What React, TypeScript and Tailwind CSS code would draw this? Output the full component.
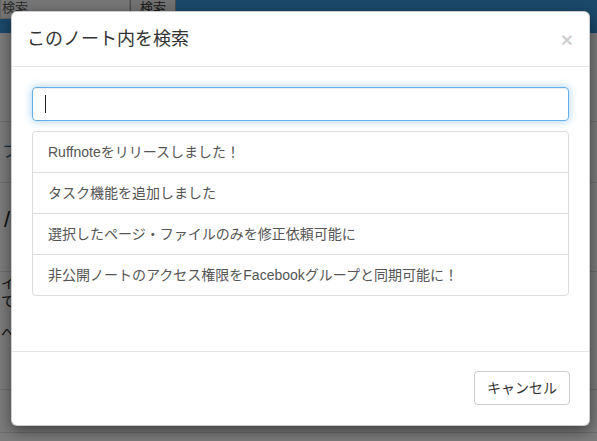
const font = { fontFamily: '"Liberation Sans", "Noto Sans CJK JP", sans-serif' };

const results = [
  "Ruffnoteをリリースしました！",
  "タスク機能を追加しました",
  "選択したページ・ファイルのみを修正依頼可能に",
  "非公開ノートのアクセス権限をFacebookグループと同期可能に！",
];

export default function App() {
  return (
    <div className="relative h-[441px] w-[597px] overflow-hidden bg-[#fafafa]" style={font}>
      {/* page behind the modal */}
      <div className="flex h-[33px] items-start bg-[#3795d7]">
        <div className="-mt-[4px] flex h-[23px] w-[177px] items-start">
          <div className="h-[23px] w-[130px] border border-[#ccc] bg-[#eee] pl-[1px] text-[13px] leading-[21px] text-[#555]">
            検索
          </div>
          <div className="h-[18px] w-[46px] border border-[#999] bg-[#e6e6e6] text-center text-[13px] leading-[22px] text-[#333]">
            検索
          </div>
        </div>
      </div>
      <div className="flex flex-col">
        <div className="h-[89px] border-b border-[#ddd]" />
        <div className="flex h-[61px] items-center border-b border-[#ddd] pl-[2px] text-[16px] text-[#2a6496]">
          フ
        </div>
        <div className="flex h-[89px] items-start border-b border-[#ddd] pl-[4px] pt-[20px] text-[22px] text-[#222]">
          /
        </div>
        <div className="flex h-[118px] flex-col border-b border-[#ddd] pl-[1px] pt-[2px] text-[14px] leading-[18px] text-[#222]">
          <span>イ</span>
          <span>て</span>
          <span className="mt-[14px]">へ</span>
        </div>
        <div className="h-[43px] border-b border-[#ddd]" />
      </div>

      {/* backdrop */}
      <div className="absolute inset-0 bg-black/50" />

      {/* modal */}
      <div className="absolute left-[11px] top-[11px] w-[579px] rounded-[6px] border border-black/20 bg-white shadow-[0_5px_15px_rgba(0,0,0,0.5)]">
        <div className="flex items-center justify-between border-b border-[#e5e5e5] px-[15px] py-[14px]">
          <h4 className="text-[18px] leading-[26px] text-[#333]">このノート内を検索</h4>
          <button className="mr-[1px] text-[21px] font-bold leading-none text-black/20">×</button>
        </div>

        <div className="px-[20px] pb-[55px] pt-[20px]">
          <div className="relative">
            <input
              className="block h-[34px] w-full rounded-[4px] border border-[#66afe9] px-[12px] py-[6px] text-[14px] text-[#555] shadow-[inset_0_1px_1px_rgba(0,0,0,0.075),0_0_8px_rgba(102,175,233,0.6)] outline-none"
              style={font}
            />
            <span className="absolute left-[13px] top-[8px] h-[18px] w-[1px] bg-[#222]" />
          </div>

          <div className="mt-[10px] flex flex-col">
            {results.map((r, i) => (
              <div
                key={r}
                className={
                  "border border-[#ddd] px-[15px] py-[10px] text-[14px] leading-[20px] text-[#555] " +
                  (i === 0 ? "rounded-t-[4px]" : "-mt-px") +
                  (i === results.length - 1 ? " rounded-b-[4px]" : "")
                }
              >
                {r}
              </div>
            ))}
          </div>
        </div>

        <div className="flex justify-end border-t border-[#e5e5e5] px-[19px] pb-[20px] pt-[19px]">
          <button
            className="h-[34px] rounded-[4px] border border-[#ccc] bg-white px-[12px] text-[14px] text-[#333]"
            style={font}
          >
            キャンセル
          </button>
        </div>
      </div>
    </div>
  );
}
